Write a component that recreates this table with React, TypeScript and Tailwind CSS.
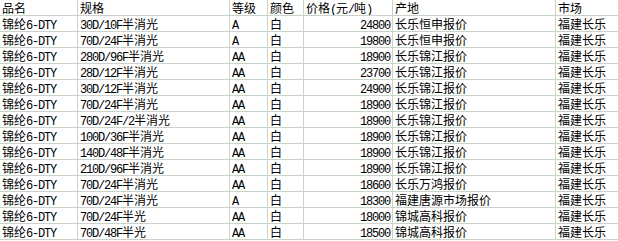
import React from 'react';

const rows = [
  ['30D/10F半消光', 'A', '24800', '长乐恒申报价'],
  ['70D/24F半消光', 'A', '19800', '长乐恒申报价'],
  ['280D/96F半消光', 'AA', '18900', '长乐锦江报价'],
  ['28D/12F半消光', 'AA', '23700', '长乐锦江报价'],
  ['30D/12F半消光', 'AA', '24900', '长乐锦江报价'],
  ['70D/24F半消光', 'AA', '18900', '长乐锦江报价'],
  ['70D/24F/2半消光', 'AA', '18900', '长乐锦江报价'],
  ['100D/36F半消光', 'AA', '18900', '长乐锦江报价'],
  ['140D/48F半消光', 'AA', '18900', '长乐锦江报价'],
  ['210D/96F半消光', 'AA', '18900', '长乐锦江报价'],
  ['70D/24F半消光', 'AA', '18600', '长乐万鸿报价'],
  ['70D/24F半消光', 'A', '18300', '福建唐源市场报价'],
  ['70D/24F半光', 'AA', '18000', '锦城高科报价'],
  ['70D/48F半光', 'AA', '18500', '锦城高科报价'],
];

// latin runs get the narrow mono font, CJK stays at 12px
function Txt({ text }: { text: string }) {
  const parts = text.match(/[\x00-\x7f]+|[^\x00-\x7f]+/g) || [];
  return (
    <>
      {parts.map((p, i) =>
        /^[\x00-\x7f]/.test(p) ? (
          <span key={i} className="font-['Liberation_Mono',monospace] tracking-[-1.2px]">
            {p}
          </span>
        ) : (
          <span key={i}>{p}</span>
        )
      )}
    </>
  );
}

const cell =
  'h-4 border-b border-r border-[#c9d3c9] pl-[2px] leading-[15px] whitespace-nowrap overflow-hidden';
const last = 'h-4 border-b border-[#c9d3c9] pl-[2px] leading-[15px] whitespace-nowrap overflow-hidden';

export default function App() {
  const header = ['品名', '规格', '等级', '颜色', '价格(元/吨)', '产地'];

  return (
    <div className="w-[618px] h-[241px] overflow-hidden bg-white text-black text-[12px] font-['Noto_Sans_CJK_SC',sans-serif]">
      <div className="grid grid-cols-[78px_152px_38px_36px_89px_163px_1fr]">
        {header.map((h) => (
          <div key={h} className={cell}>
            <Txt text={h} />
          </div>
        ))}
        <div className={last}>市场</div>

        {rows.map((r, i) => (
          <React.Fragment key={i}>
            <div className={cell}>
              <Txt text="锦纶6-DTY" />
            </div>
            <div className={cell}>
              <Txt text={r[0]} />
            </div>
            <div className={cell}>
              <Txt text={r[1]} />
            </div>
            <div className={cell}>白</div>
            <div className={cell + ' text-right pr-[2px]'}>
              <Txt text={r[2]} />
            </div>
            <div className={cell}>{r[3]}</div>
            <div className={last}>福建长乐</div>
          </React.Fragment>
        ))}
      </div>
    </div>
  );
}
